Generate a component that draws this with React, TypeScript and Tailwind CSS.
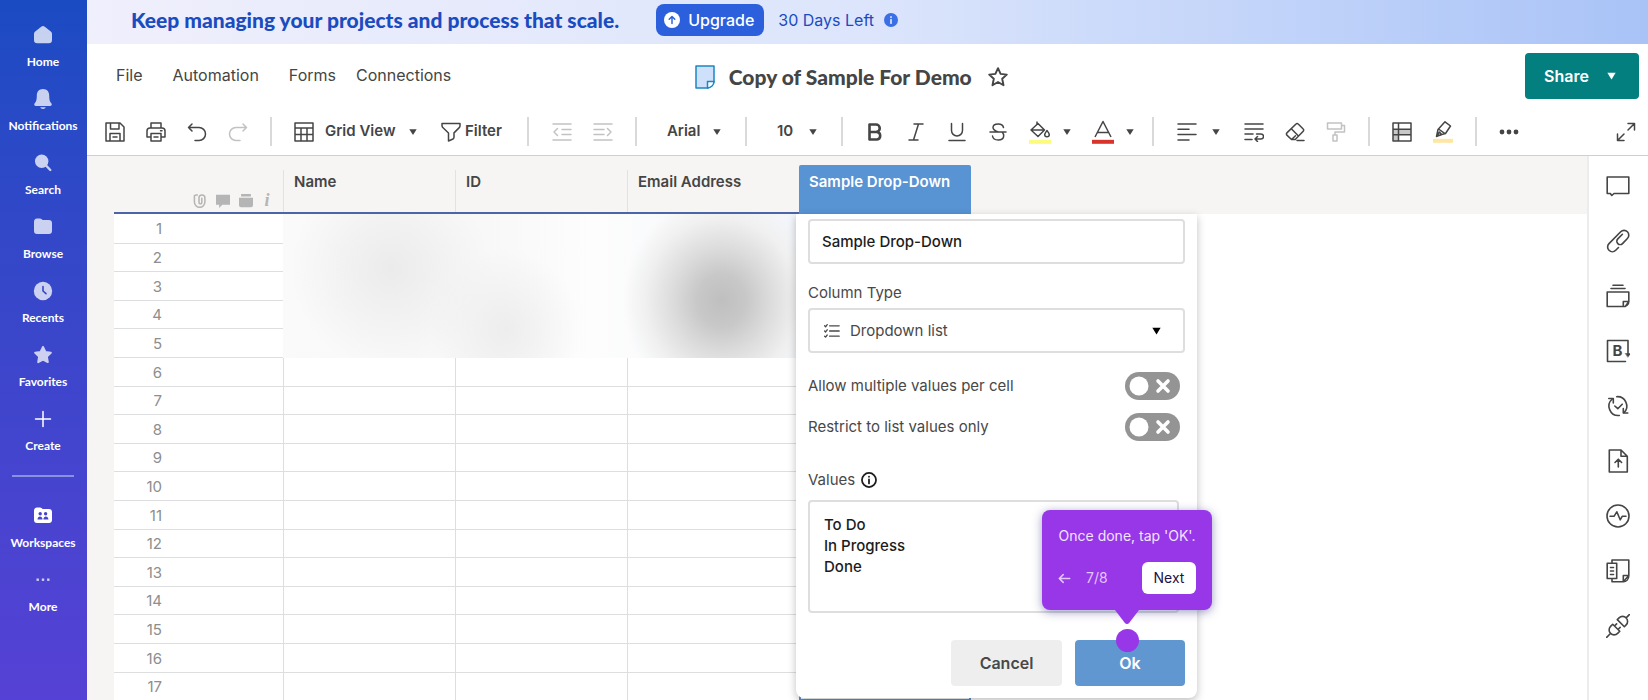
import React from 'react';
import clsx from 'clsx';

type IconProps = { children: React.ReactNode; className?: string; box?: number; stroke?: number };

const Icon = ({ children, className = 'size-5', box = 20, stroke = 1.5 }: IconProps) => (
  <svg
    viewBox={`0 0 ${box} ${box}`}
    className={clsx('shrink-0', className)}
    fill="none"
    stroke="currentColor"
    strokeWidth={stroke}
    strokeLinejoin="round"
    strokeLinecap="round"
    aria-hidden="true"
  >
    {children}
  </svg>
);

const Caret = ({ className }: { className?: string }) => (
  <svg viewBox="0 0 8 6" className={clsx('shrink-0', className ?? 'w-2 h-1.5')} fill="currentColor" aria-hidden="true">
    <path d="M0.3 0.2h7.4L4 6z" />
  </svg>
);

const solid = { fill: 'currentColor', stroke: 'none' };

const navItems = [
  {
    label: 'Home',
    icon: <path {...solid} d="M10 1c.7 0 1.200.2 1.800.7l6 4.700c.8.6 1.200 1.400 1.200 2.400v6.200A3.200 3.200 0 0 1 15.800 18.200H4.200A3.200 3.200 0 0 1 1 15V8.800c0-1 .4-1.800 1.200-2.400l6-4.700C8.800 1.200 9.300 1 10 1z" />,
  },
  {
    label: 'Notifications',
    icon: (
      <g {...solid}>
        <path d="M10 0c-4 0-6.200 2.800-6.200 6.500 0 4.500-.7 6.300-1.900 7.600-1.300 1.400-.6 2.900 1 2.900h14.200c1.600 0 2.300-1.500 1-2.900-1.200-1.300-1.900-3.100-1.900-7.600C16.200 2.800 14 0 10 0z" />
        <path d="M7.300 18.300h5.400c-.3 1-1.400 1.700-2.700 1.700s-2.400-.7-2.700-1.700z" />
      </g>
    ),
  },
  {
    label: 'Search',
    icon: (
      <g>
        <circle cx="8.700" cy="8.300" r="6.700" {...solid} />
        <path d="M13 12.500l4.300 4.500" strokeWidth="2.400" />
      </g>
    ),
  },
  {
    label: 'Browse',
    icon: <path {...solid} d="M1 5c0-2 1-3.500 3-3.500h3c1.300 0 1.700.8 2.700 1.500h6.100C18 3 19 4.200 19 6v8c0 2-1.200 3-3 3H4c-2 0-3-1-3-3z" />,
  },
  {
    label: 'Recents',
    icon: (
      <g>
        <circle cx="10" cy="10" r="9.200" {...solid} />
        <path d="M10 5.500V10l3 2.700" stroke="#3348c8" strokeWidth="1.600" />
      </g>
    ),
  },
  {
    label: 'Favorites',
    icon: <path fill="currentColor" strokeWidth="2" d="M10 2l2.400 5 5.400.8-3.900 3.800.9 5.500-4.800-2.600-4.800 2.600.9-5.500L2.200 7.800l5.400-.8z" />,
  },
  { label: 'Create', strong: true, icon: <path d="M10 2.500v15M2.500 10h15" /> },
];

const moreItems = [
  {
    label: 'Workspaces',
    strong: true,
    icon: (
      <g stroke="none">
        <path fill="currentColor" d="M1 5c0-2 1-3.500 3-3.500h3c1.300 0 1.700.8 2.700 1.500h6.100C18 3 19 4.200 19 6v8c0 2-1.200 3-3 3H4c-2 0-3-1-3-3z" />
        <g fill="#4544cd">
          <circle cx="7.200" cy="7.700" r="1.700" />
          <circle cx="12.600" cy="7.700" r="1.700" />
          <path d="M4.500 13.500c0-4 5-4 5 0zM10.400 13.500c0-4 5-4 5 0z" />
        </g>
      </g>
    ),
  },
  {
    label: 'More',
    icon: (
      <g {...solid}>
        <rect x="3.500" y="8.500" width="2.400" height="2.400" />
        <rect x="8.800" y="8.500" width="2.400" height="2.400" />
        <rect x="14.100" y="8.500" width="2.400" height="2.400" />
      </g>
    ),
  },
];

const NavItem = ({ label, icon, strong }: { label: string; icon: React.ReactNode; strong?: boolean }) => (
  <a href="#" className="flex flex-col items-center gap-2 text-white">
    <Icon className={clsx('size-5', !strong && 'opacity-75')}>{icon}</Icon>
    <span className="text-[12px] leading-[18px] font-bold">{label}</span>
  </a>
);

const Sidebar = () => (
  <nav className="w-[87px] shrink-0 flex flex-col gap-[18px] pt-[25px] pr-px font-['Lato',sans-serif] bg-linear-to-b from-[#1a4bc3] via-[#3b46cb] to-[#5541d5]">
    {navItems.map((item) => (
      <NavItem key={item.label} {...item} />
    ))}
    <hr className="mx-3 mt-0.5 mb-[11px] border-0 h-0.5 bg-[#8a91e3]" />
    {moreItems.map((item) => (
      <NavItem key={item.label} {...item} />
    ))}
  </nav>
);

const Banner = () => (
  <div className="h-11 shrink-0 flex items-center pb-1 pl-11 text-[#1b4bc0] bg-linear-to-r from-[#f0effc] via-[#dce5fb] to-[#a9c3f7]">
    <p className="font-['Lato',sans-serif] font-black text-[21px]">Keep managing your projects and process that scale.</p>
    <button className="ml-[37px] h-8 pl-2 pr-[10px] flex items-center gap-2 rounded-lg bg-[#2b5fdb] text-white text-base font-medium">
      <Icon className="size-4">
        <circle cx="10" cy="10" r="10" fill="#fff" stroke="none" />
        <path d="M10 14.500v-9M6.500 9L10 5.500 13.500 9" stroke="#2b5fdb" strokeWidth="1.800" />
      </Icon>
      Upgrade
    </button>
    <span className="ml-[14px] text-base">30 Days Left</span>
    <Icon className="ml-[10px] size-[14px]">
      <circle cx="10" cy="10" r="10" fill="#3b6fe6" stroke="none" />
      <path d="M10 9.500v5M10 5.500v.5" stroke="#dfe8fd" strokeWidth="2.400" />
    </Icon>
  </div>
);

const Header = () => (
  <header className="h-16 shrink-0 grid grid-cols-[38%_1fr_auto] items-center pl-[29px] pr-[9px]">
    <div className="flex items-center pb-0.5 text-base">
      <button className="mr-[30px]">File</button>
      <button className="mr-[30px]">Automation</button>
      <button className="mr-5">Forms</button>
      <button>Connections</button>
    </div>
    <div className="flex items-center pt-0.5">
      <svg viewBox="0 0 20 24" className="w-5 h-6 shrink-0" fill="none" stroke="#1b86c4" strokeWidth="1.500" strokeLinejoin="round" aria-hidden="true">
        <path d="M1 1h18v16l-6 6H1z" fill="#cfe0fb" />
        <path d="M19 16.500h-6.500V23c3.500 0 6.500-3 6.500-6.500z" fill="#fff" />
      </svg>
      <h1 className="ml-[14px] font-['Lato',sans-serif] font-black text-[21px]">Copy of Sample For Demo</h1>
      <button aria-label="Add to favorites" className="ml-4">
        <Icon>
          <path strokeWidth="1.900" d="M10 1.200l2.600 5.700 6.200.7-4.600 4.200 1.300 6.400L10 15l-5.500 3.200 1.300-6.400L1.200 7.600l6.200-.7z" />
        </Icon>
      </button>
    </div>
    <button className="h-[46px] w-[114px] flex items-center pl-[19px] gap-[18px] rounded bg-[#037f80] text-white text-base font-semibold">
      Share <Caret className="w-[9px] h-[8px]" />
    </button>
  </header>
);

const Separator = ({ className = 'mx-[22px]' }: { className?: string }) => (
  <div className={clsx('w-0.5 h-[29px] bg-[#d9d9d9] shrink-0', className)} />
);

const Tool = ({ label, children, disabled }: { label: string; children: React.ReactNode; disabled?: boolean }) => (
  <button aria-label={label} disabled={disabled} className="flex items-center text-[#454545] disabled:text-[#c2c2c2]">
    <Icon>{children}</Icon>
  </button>
);

const ToolSelect = ({ label, value, className }: { label: string; value: string; className: string }) => (
  <span className="grid items-center shrink-0">
    <select aria-label={label} className={clsx('col-start-1 row-start-1 appearance-none font-semibold text-[15px] outline-none', className)}>
      <option>{value}</option>
    </select>
    <Caret className="col-start-1 row-start-1 justify-self-end mr-0.5 w-2 h-1.5 pointer-events-none" />
  </span>
);

const Toolbar = () => (
  <div role="toolbar" className="h-12 shrink-0 flex items-center pl-[18px] pr-3 border-b border-[#cdd0d2] text-[#454545]">
    <div className="flex gap-[21px]">
      <Tool label="Save">
        <path d="M1 1h14l4 4v14H1zM5.500 1v6h8.500V1M5 19v-7.500h10V19M8 15h4" />
      </Tool>
      <Tool label="Print">
        <path d="M5 6V1h10v5M5 15H1V9c0-2 1-3 3-3h12c2 0 3 1 3 3v6h-4M5 11.500h10V19H5zM14.500 8.700h1.500M8 15h4" />
      </Tool>
      <Tool label="Undo">
        <path d="M5 2L1.500 5.500 5 9M1.500 5.500H12a6.500 6.500 0 0 1 0 13H8" />
      </Tool>
      <Tool label="Redo" disabled>
        <path d="M15 2l3.500 3.500L15 9M18.500 5.500H8a6.500 6.500 0 0 0 0 13h4" />
      </Tool>
    </div>
    <Separator />
    <div className="flex items-center gap-[11px]">
      <Icon>
        <path d="M1 1h18v18H1zM1 6h18M1 12.500h18M7 6v13M13 6v13" />
      </Icon>
      <ToolSelect label="View" value="Grid View" className="w-[94px]" />
    </div>
    <button className="ml-[22px] flex items-center gap-1 font-semibold text-[15px]">
      <Icon>
        <path d="M1 1.500h18v2.200c0 1-.3 1.500-1 2.200l-5 5v4.400c0 .8-.3 1.300-1 1.700L7.500 19v-8l-5.200-5C1.400 5.200 1 4.700 1 3.700z" />
      </Icon>
      Filter
    </button>
    <Separator className="ml-[25px] mr-[23px]" />
    <div className="flex gap-[21px]">
      <Tool label="Outdent" disabled>
        <path d="M1 2h18M10 7.500h9M10 12.500h9M1 18h18M5.500 6.500L2 10l3.500 3.500" />
      </Tool>
      <Tool label="Indent" disabled>
        <path d="M1 2h18M1 7.500h10M1 12.500h10M1 18h18M14.500 6.500L18 10l-3.500 3.500" />
      </Tool>
    </div>
    <Separator />
    <ToolSelect label="Font" value="Arial" className="w-16 pl-2" />
    <Separator />
    <ToolSelect label="Font size" value="10" className="w-[50px] pl-2" />
    <Separator />
    <div className="flex items-center gap-[21px]">
      <Tool label="Bold">
        <path d="M4.500 2.500H11a3.700 3.700 0 0 1 0 7.500H4.500zM4.500 10H12a3.800 3.800 0 0 1 0 7.500H4.500z" strokeWidth="2.600" />
      </Tool>
      <Tool label="Italic">
        <path d="M8 2h9M3 18h9M12.500 2l-5 16" />
      </Tool>
      <Tool label="Underline">
        <path d="M4.500 1.500v7a5.500 5.500 0 0 0 11 0v-7M2 18.500h16" />
      </Tool>
      <Tool label="Strikethrough">
        <path d="M15.500 5.500C15 3 13 2 10.200 2 7.300 2 5 3.300 5 5.600 5 8.500 8 9.300 10.500 10M2 10h16M4.500 14c.4 2.600 2.500 4 5.700 4 3.300 0 5.500-1.500 5.500-4.200 0-1.500-.6-2.700-1.700-3.800" />
      </Tool>
      <button aria-label="Background color" className="flex items-center gap-3">
        <svg viewBox="0 0 22 24" className="w-[22px] h-6" fill="none" stroke="currentColor" strokeWidth="1.500" strokeLinejoin="round" aria-hidden="true">
          <path d="M8 1.500v3M2 10l7-6.500 6.500 6.500-6.500 6.500zM2.500 10h13" />
          <path d="M18 10.500c1.500 2 2.300 3 2.300 4a2.300 2.300 0 0 1-4.600 0c0-1 .8-2 2.300-4z" />
          <path d="M0 21.800h22" stroke="#fcfb80" strokeWidth="4" />
        </svg>
        <Caret />
      </button>
      <button aria-label="Text color" className="flex items-center gap-3">
        <svg viewBox="0 0 22 24" className="w-[22px] h-6" fill="none" stroke="currentColor" strokeWidth="1.500" strokeLinejoin="round" aria-hidden="true">
          <path d="M3 17L11 1.500 19 17M5.500 12.500h11" />
          <path d="M0 21.800h22" stroke="#d9342b" strokeWidth="4" />
        </svg>
        <Caret />
      </button>
    </div>
    <Separator className="ml-[18px] mr-[23px]" />
    <button aria-label="Align" className="flex items-center gap-[15px]">
      <Icon>
        <path d="M1 2h18M1 7.300h11M1 12.500h18M1 18h11" />
      </Icon>
      <Caret />
    </button>
    <div className="ml-6 flex gap-[21px]">
      <Tool label="Wrap text">
        <path d="M1 2h18M1 7h18M1 12h8M1 17.500h7M12.500 12H17a2.500 2.500 0 0 1 0 5h-5.500M13.500 14.500L11 17l2.500 2.500" />
      </Tool>
      <Tool label="Clear format">
        <path d="M6.500 17.500l-4.600-4.400a1.500 1.500 0 0 1 0-2.200L11 2a1.500 1.500 0 0 1 2.200 0l5 5a1.500 1.500 0 0 1 0 2.200l-8 8.300zM6.300 6.800l7.200 7.200M6.500 17.500l4-3.700M12 18.500h7" />
      </Tool>
      <Tool label="Format painter" disabled>
        <path d="M1.500 1h14v6h-14zM15.500 3.500h3v6.500H9v3M7 13h4v6H7z" />
      </Tool>
    </div>
    <Separator />
    <div className="flex items-center gap-[21px]">
      <Tool label="Conditional formatting">
        <path d="M1 7.500h18v5H1zM1 13h5v6H1z" fill="#c8c8c8" stroke="none" />
        <path d="M1 1h18v18H1zM1 7.300h18M1 12.700h18M6.500 1v18" />
      </Tool>
      <button aria-label="Highlight changes" className="flex items-center">
        <svg viewBox="0 0 20 22" className="w-5 h-[22px]" fill="none" stroke="currentColor" strokeWidth="1.500" strokeLinejoin="round" aria-hidden="true">
          <path d="M12 .8l5.500 4.200-5 7.500-5.500 1.500-3.500 1.500 1.500-7zM5.500 8l6.500 4.700M3.500 15.300l3-4.300 2 2.700z" />
          <path d="M0 19.800h20" stroke="#ffe7a3" strokeWidth="4" />
        </svg>
      </button>
    </div>
    <Separator />
    <Tool label="More">
      <g {...solid}>
        <circle cx="3" cy="10" r="2.400" />
        <circle cx="10" cy="10" r="2.400" />
        <circle cx="17" cy="10" r="2.400" />
      </g>
    </Tool>
    <div className="ml-auto">
      <Tool label="Full screen">
        <path d="M12 1.500h6.500V8M18 2l-6 6M1.500 12v6.500H8M2 18l6-6" />
      </Tool>
    </div>
  </div>
);

const Switch = ({ label }: { label: string }) => (
  <label className="flex items-center justify-between pr-[5px]">
    {label}
    <span className="grid items-center">
      <input type="checkbox" role="switch" className="col-start-1 row-start-1 appearance-none w-[55px] h-7 rounded-full bg-[#949494]" />
      <svg viewBox="0 0 55 28" className="col-start-1 row-start-1 w-[55px] h-7 pointer-events-none" aria-hidden="true">
        <circle cx="14" cy="14" r="9.500" fill="#fff" />
        <path d="M33 9l10 10M43 9L33 19" stroke="#fff" strokeWidth="3.600" strokeLinecap="round" />
      </svg>
    </span>
  </label>
);

const Coachmark = () => (
  <div className="absolute right-[-27px] bottom-[76px] w-[170px] h-[100px] rounded-lg bg-[#9737e8] shadow-[0_2px_10px_rgba(60,60,140,0.5)] px-4 pt-4 text-sm font-normal text-[#f3e3ff] font-['Inter',sans-serif]">
    <p className="whitespace-nowrap leading-5 text-center">Once done, tap &apos;OK&apos;.</p>
    <div className="mt-4 flex items-center text-[#e3c6fb]">
      <button aria-label="Back">
        <Icon className="size-[13px]" stroke={2.4}>
          <path d="M18 10H2M8 4l-6 6 6 6" />
        </Icon>
      </button>
      <span className="ml-[15px]">7/8</span>
      <button className="ml-auto w-[54px] h-8 rounded-md bg-white text-[#1f1147]">Next</button>
    </div>
    <svg viewBox="0 0 24 14" className="absolute top-full right-[73px] w-6 h-[14px]" aria-hidden="true">
      <path d="M0 0h24l-9.500 12.500q-2.500 3-5 0z" fill="#9737e8" />
    </svg>
    <span className="absolute top-[119px] right-[73px] size-[23px] rounded-full bg-[#9737e8]" />
  </div>
);

const ColumnPanel = () => (
  <form className="absolute top-full left-[-3px] z-10 w-[401px] px-3 pt-[5px] pb-3 bg-white rounded-b-lg shadow-[0_3px_8px_rgba(0,0,0,0.25)] text-[15px] leading-5 text-[#484848] font-normal">
    <input
      aria-label="Column name"
      defaultValue="Sample Drop-Down"
      className="block w-full h-[45px] px-3 border-2 border-[#dedede] rounded text-[#1c1c1c] font-medium outline-none"
    />
    <label htmlFor="column-type" className="block mt-[19px]">
      Column Type
    </label>
    <div className="mt-[5px] grid items-center">
      <select
        id="column-type"
        className="col-start-1 row-start-1 appearance-none w-full h-[45px] pl-10 border-2 border-[#dedede] rounded outline-none"
      >
        <option>Dropdown list</option>
      </select>
      <Icon className="col-start-1 row-start-1 ml-4 size-4 pointer-events-none" stroke={1.6}>
        <path d="M7 3.500h12M7 10h12M7 16.500h12M.8 3.500l1.200 1.200L4 2M.8 10l1.200 1.200L4 8.500M.8 16.500l1.200 1.200L4 15" />
      </Icon>
      <Caret className="col-start-1 row-start-1 justify-self-end mr-6 w-[9px] h-[8px] text-black pointer-events-none" />
    </div>
    <div className="mt-[19px] flex flex-col gap-[13px]">
      <Switch label="Allow multiple values per cell" />
      <Switch label="Restrict to list values only" />
    </div>
    <div className="mt-[29px] flex items-center gap-[6px]">
      <label htmlFor="values">Values</label>
      <Icon className="size-4 text-[#1c1c1c]">
        <circle cx="10" cy="10" r="8.800" strokeWidth="2.200" />
        <path d="M10 9.300v5M10 5.700v.3" strokeWidth="2.200" />
      </Icon>
    </div>
    <div className="pr-[6px] mt-[10px]">
      <textarea
        id="values"
        defaultValue={'To Do\nIn Progress\nDone'}
        className="block w-full h-[113px] px-[14px] py-3 border-2 border-[#dedede] rounded text-[#1c1c1c] font-medium leading-[21px] resize-none outline-none"
      />
    </div>
    <div className="relative mt-[27px] flex justify-end gap-[13px] text-base font-semibold">
      <button type="button" className="w-[111px] h-[46px] rounded bg-[#eeeeee]">
        Cancel
      </button>
      <button type="button" className="w-[110px] h-[46px] rounded bg-[#6097d1] text-white">
        Ok
      </button>
      <Coachmark />
    </div>
  </form>
);

const rows = Array.from({ length: 17 }, (_, i) => i + 1);

const Grid = () => (
  <div className="flex-1 min-w-0 flex bg-white">
    <div className="w-[27px] shrink-0 bg-[#f6f5f4]" />
    <table className="w-full table-fixed border-separate border-spacing-0 self-start text-[15px] leading-5">
      <colgroup>
        <col className="w-[169px]" />
        <col className="w-[172px]" />
        <col className="w-[172px]" />
        <col className="w-[172px]" />
        <col className="w-[172px]" />
        <col />
      </colgroup>
      <thead className="bg-[#f6f5f4] text-left font-semibold text-[#454545]">
        <tr>
          <th className="p-0">
            <div className="h-[58px] flex items-end justify-end gap-[9px] pb-1 pr-[11px] border-b-2 border-[#4c65a8] text-[#b5b5b5]">
              <Icon className="size-[14px]" stroke={2.2}>
                <path d="M2 2.500v9a7.500 7.500 0 0 0 15 0V5.500a4.200 4.200 0 0 0-8.400 0V12a2 2 0 0 0 4 0V6M2 2.500A4 4 0 0 1 6 1.500" />
              </Icon>
              <Icon className="size-[14px]">
                <path {...solid} d="M0 1h20v14.500H9L4.500 20v-4.500H0z" />
              </Icon>
              <Icon className="size-[14px]">
                <path {...solid} d="M3 0h14v3.500H3zM0 5.500h20V16a3 3 0 0 1-3 3H3a3 3 0 0 1-3-3z" />
              </Icon>
              <span className="w-[10px] text-center font-['Liberation_Serif',serif] italic font-bold text-lg leading-4">i</span>
            </div>
          </th>
          {['Name', 'ID', 'Email Address'].map((name) => (
            <th key={name} className="p-0 font-semibold">
              <div className="h-[58px] flex items-end border-b-2 border-[#4c65a8]">
                <div className="w-full h-[42px] pt-0.5 pl-[10px] border-l border-[#e2e2e2]">{name}</div>
              </div>
            </th>
          ))}
          <th className="p-0 font-semibold">
            <div className="relative h-[58px] flex items-end">
              <div className="w-full h-[49px] pt-[7px] pl-[10px] rounded-t-xs bg-[#5893d3] text-white">Sample Drop-Down</div>
              <ColumnPanel />
            </div>
          </th>
          <th />
        </tr>
      </thead>
      <tbody>
        {rows.map((row) => (
          <tr key={row} className="h-[29px] first:h-[30px] nth-[5n+2]:h-[28px] nth-[5n+4]:h-[28px]">
            <td className="p-0 pt-px border-b border-[#dcdee0] text-[#8e8e8e]">
              <span className="block w-12 text-right">{row}</span>
            </td>
            {row === 1 && (
              <td
                rowSpan={5}
                colSpan={3}
                className="p-0 bg-[radial-gradient(ellipse_98px_105px_at_85%_60%,#bfbfbf,#c8c8c8_25%,#dcdcdc_50%,#f0f0f0_78%,transparent),radial-gradient(ellipse_100px_100px_at_21%_38%,#ebebeb,transparent),radial-gradient(ellipse_75px_80px_at_43%_80%,#ededed,transparent),linear-gradient(90deg,#fafafa,#f8f8f8_40%,#fdfdfd_60%,#f2f5f9)]"
              />
            )}
            {row > 5 && (
              <>
                <td className="p-0 border-b border-l border-[#dcdee0]" />
                <td className="p-0 border-b border-l border-[#dcdee0]" />
                <td className="p-0 border-b border-l border-[#dcdee0]" />
              </>
            )}
            <td className={clsx('p-0 border-x-2 border-[#5893d3]', row === 17 && 'border-b-2')} />
            <td />
          </tr>
        ))}
      </tbody>
    </table>
  </div>
);

const railItems = [
  { label: 'Conversations', icon: <path d="M1.200 3h21.600v16.500H8l-2.200 2-1.500-2H1.200z" /> },
  {
    label: 'Attachments',
    icon: <path d="M12.500 18.500l-2.800 2.800a4.700 4.700 0 0 1-6.700-6.700L14.700 2.800a4.700 4.700 0 0 1 6.700 6.700l-4.900 5.100a3.300 3.300 0 0 1-4.700-4.700l4.600-4.600" />,
  },
  { label: 'Proofs', icon: <path d="M7 1.200h10M5 4.500h14M1.200 8h21.600v9.500l-3.500 5H1.200zM22.800 17.500h-5.500v5c3 0 5.500-2 5.500-5z" /> },
  {
    label: 'Brandfolder',
    icon: (
      <g>
        <path d="M22 15V1.500H1.500v21h18" />
        <path d="M19.500 14.500h5L22 18z" fill="currentColor" strokeWidth="0.500" />
        <text x="11.500" y="17" textAnchor="middle" fontSize="15" fontWeight="700" fill="currentColor" stroke="none">
          B
        </text>
      </g>
    ),
  },
  {
    label: 'Update requests',
    icon: (
      <g>
        <path d="M13.300 21.500A9.400 9.400 0 0 1 6.300 5M10.700 2.700A9.400 9.400 0 0 1 18 18.700M8.800 12l3 2.700 4.400-4.500" />
        <path d="M2.800 4.500h4.500V9M21.800 19h-4.500v-4.500" />
      </g>
    ),
  },
  {
    label: 'Publish',
    icon: <path d="M15 1H3.300v22h18V7.300zM15 1v6.300h6.300M12.300 18v-7.500M9 13.500l3.300-3.300 3.300 3.300" />,
  },
  {
    label: 'Activity log',
    icon: (
      <g>
        <circle cx="12" cy="12" r="11" />
        <path d="M4 12.300h4l2.800-4.500 3.400 8 2-3.500h3.800" />
      </g>
    ),
  },
  {
    label: 'Summary',
    icon: (
      <g>
        <path d="M6 4V1h16.800v15.500l-5.500 6.300H6V19.500M22.800 16.500h-5.500v6.300c3 0 5.500-2.500 5.500-6.300zM1.200 4.300h9.500v15.200H1.200z" />
        <path d="M4.500 8.500h3M4.500 12h3M4.500 15.500h3" strokeDasharray="1.200 0.800" />
      </g>
    ),
  },
  {
    label: 'Connectors',
    icon: (
      <g transform="translate(12 12) rotate(-45)">
        <path d="M-16 0h5M-2.500-5v10h-3a5 5 0 0 1 0-10zM-2.500-2.500h3M-2.500 2.500h3M4-5v10h2.500a5 5 0 0 0 0-10zM11.500 0h4.500" />
      </g>
    ),
  },
];

const Rail = () => (
  <aside className="w-[61px] shrink-0 flex flex-col items-center gap-[31px] pt-[18px] pr-px bg-white border-l-2 border-[#ececec] text-[#454545]">
    {railItems.map((item) => (
      <button key={item.label} aria-label={item.label}>
        <Icon className="size-6" box={24} stroke={1.6}>
          {item.icon}
        </Icon>
      </button>
    ))}
  </aside>
);

const App = () => (
  <div className="h-screen flex overflow-hidden bg-white text-[#454545] font-['Inter',sans-serif]">
    <Sidebar />
    <div className="flex-1 min-w-0 flex flex-col">
      <Banner />
      <Header />
      <Toolbar />
      <div className="flex-1 min-h-0 flex overflow-hidden">
        <Grid />
        <Rail />
      </div>
    </div>
  </div>
);

export default App;
